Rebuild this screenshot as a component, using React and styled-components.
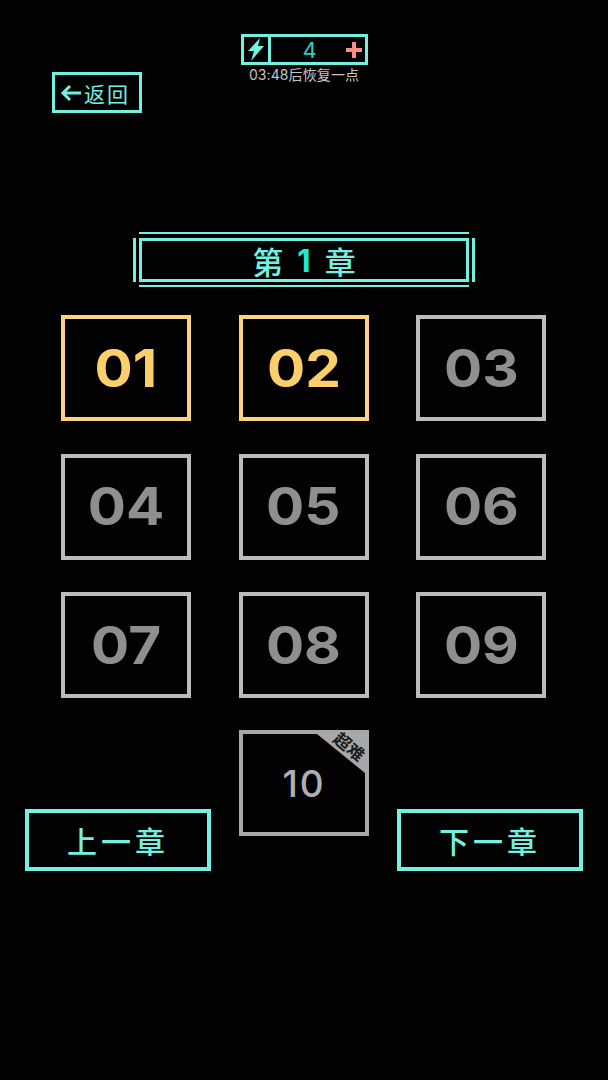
import styled, { createGlobalStyle } from 'styled-components'

const CYAN = '#72f0e0'

const levels = [
    { no: '01', open: true }, { no: '02', open: true }, { no: '03' },
    { no: '04' }, { no: '05' }, { no: '06' },
    { no: '07' }, { no: '08' }, { no: '09' },
]

const GlobalStyle = createGlobalStyle`
    html, body {
        margin: 0;
        background: #000;
    }
    body {
        font-family: 'Inter', 'Noto Sans CJK SC', sans-serif;
    }
`

const Page = styled.div`
    width: 608px;
    height: 1080px;
    overflow: hidden;
    background: #020202;
    display: flex;
    flex-direction: column;
    box-sizing: border-box;
    padding-top: 34px;
`

const TopArea = styled.div`
    height: 204px;
    display: flex;
    flex-direction: column;
    padding-left: 52px;
`

const Energy = styled.div`
    align-self: center;
    margin-left: -52px;
    display: flex;
    flex-direction: column;
    align-items: center;
`

const EnergyBar = styled.div`
    width: 127px;
    height: 31px;
    box-sizing: border-box;
    border: 3px solid ${CYAN};
    display: flex;
    align-items: center;
`

const BoltCell = styled.div`
    width: 27px;
    height: 100%;
    box-sizing: border-box;
    border-right: 3px solid ${CYAN};
    display: flex;
    align-items: center;
    justify-content: center;
`

const EnergyCount = styled.div`
    flex: 1;
    padding-left: 4px;
    text-align: center;
    font-size: 22px;
    color: #2fd0c0;
`

const PlusIcon = styled.svg`
    width: 18px;
    height: 18px;
    margin-right: 2px;
`

const Timer = styled.div`
    margin-top: 1px;
    font-size: 14px;
    line-height: 17px;
    letter-spacing: 0.1px;
    color: #c4c4c4;
    white-space: nowrap;
`

const BackButton = styled.div`
    width: 90px;
    height: 41px;
    margin-top: -11px;
    box-sizing: border-box;
    border: 3px solid ${CYAN};
    display: flex;
    align-items: center;
    padding-left: 5px;
    gap: 2px;
    color: ${CYAN};
    font-size: 21px;
    letter-spacing: 2px;
`

const TitleWrap = styled.div`
    position: relative;
    align-self: center;
    width: 330px;
    height: 44px;
    box-sizing: border-box;
    border: 3px solid ${CYAN};
    display: flex;
    align-items: center;
    justify-content: center;
    gap: 14px;
    font-size: 31px;
    font-weight: 500;
    color: ${CYAN};

    &::before {
        content: '';
        position: absolute;
        left: -3px;
        right: -3px;
        top: -9px;
        bottom: -8px;
        border-top: 2px solid ${CYAN};
        border-bottom: 2px solid ${CYAN};
    }

    &::after {
        content: '';
        position: absolute;
        left: -9px;
        right: -9px;
        top: -3px;
        bottom: -3px;
        border-left: 3px solid ${CYAN};
        border-right: 3px solid ${CYAN};
    }
`

const TitleNumber = styled.span`
    font-weight: 700;
    color: #20e8d4;
`

const Levels = styled.div`
    margin-top: 33px;
    padding-left: 61px;
    display: grid;
    grid-template-columns: repeat(3, 130px);
    column-gap: 47.5px;
    row-gap: 32.5px;
`

const LevelCell = styled.div`
    width: 130px;
    height: 106px;
    box-sizing: border-box;
    border: 4px solid ${props => (props.$open ? '#fcd27e' : '#bcbcbc')};
    display: flex;
    align-items: center;
    justify-content: center;
    color: ${props => (props.$open ? '#fbd06c' : '#8f8f8f')};
    font-size: 52px;
    font-weight: 700;
`

const Wide = styled.span`
    display: inline-block;
    transform: scaleX(1.09);
`

const BottomRow = styled.div`
    height: 141px;
    margin-top: 32px;
    padding: 0 25px;
    display: flex;
    justify-content: space-between;
    align-items: flex-end;
`

const HardCell = styled.div`
    position: relative;
    align-self: flex-start;
    width: 130px;
    height: 106px;
    box-sizing: border-box;
    border: 4px solid #a8a8a8;
    display: flex;
    align-items: center;
    justify-content: center;
    color: #b0b0b0;
    font-size: 37px;
    font-weight: 500;
    letter-spacing: 2px;
`

const HardBadge = styled.div`
    position: absolute;
    top: 0;
    right: 0;
    width: 48px;
    height: 39px;
    background: #a8a8a8;
    clip-path: polygon(0 0, 100% 0, 100% 100%);
`

const HardLabel = styled.span`
    position: absolute;
    top: 5px;
    right: -1px;
    transform: rotate(40deg);
    font-size: 17px;
    line-height: 16px;
    font-weight: 700;
    letter-spacing: 0;
    color: #1c1c1c;
    white-space: nowrap;
`

const ChapterButton = styled.div`
    width: 186px;
    height: 62px;
    box-sizing: border-box;
    border: 4px solid ${CYAN};
    display: flex;
    align-items: center;
    justify-content: center;
    font-size: 30px;
    font-weight: 500;
    letter-spacing: 4px;
    color: ${CYAN};
`

export default function App() {
    return (
        <Page>
            <GlobalStyle />
            <TopArea>
                <Energy>
                    <EnergyBar>
                        <BoltCell>
                            <svg width="20" height="25" viewBox="0 0 20 25">
                                <path d="M14 1 L2 14 H8 L5 24 L18 9 H12 Z" fill={CYAN} />
                            </svg>
                        </BoltCell>
                        <EnergyCount>4</EnergyCount>
                        <PlusIcon viewBox="0 0 18 18">
                            <path d="M9 1 V17 M1 9 H17" stroke="#f98f8c" strokeWidth="4" />
                        </PlusIcon>
                    </EnergyBar>
                    <Timer>03:48后恢复一点</Timer>
                </Energy>
                <BackButton>
                    <svg width="22" height="18" viewBox="0 0 22 18">
                        <path d="M21 9 H3 M10 2 L3 9 L10 16" stroke={CYAN} strokeWidth="3" fill="none" />
                    </svg>
                    返回
                </BackButton>
            </TopArea>
            <TitleWrap>
                第 <TitleNumber>1</TitleNumber> 章
            </TitleWrap>
            <Levels>
                {levels.map(level => (
                    <LevelCell key={level.no} $open={level.open}>
                        <Wide>{level.no}</Wide>
                    </LevelCell>
                ))}
            </Levels>
            <BottomRow>
                <ChapterButton>上一章</ChapterButton>
                <HardCell>
                    <HardBadge />
                    <HardLabel>超难</HardLabel>
                    10
                </HardCell>
                <ChapterButton>下一章</ChapterButton>
            </BottomRow>
        </Page>
    )
}
